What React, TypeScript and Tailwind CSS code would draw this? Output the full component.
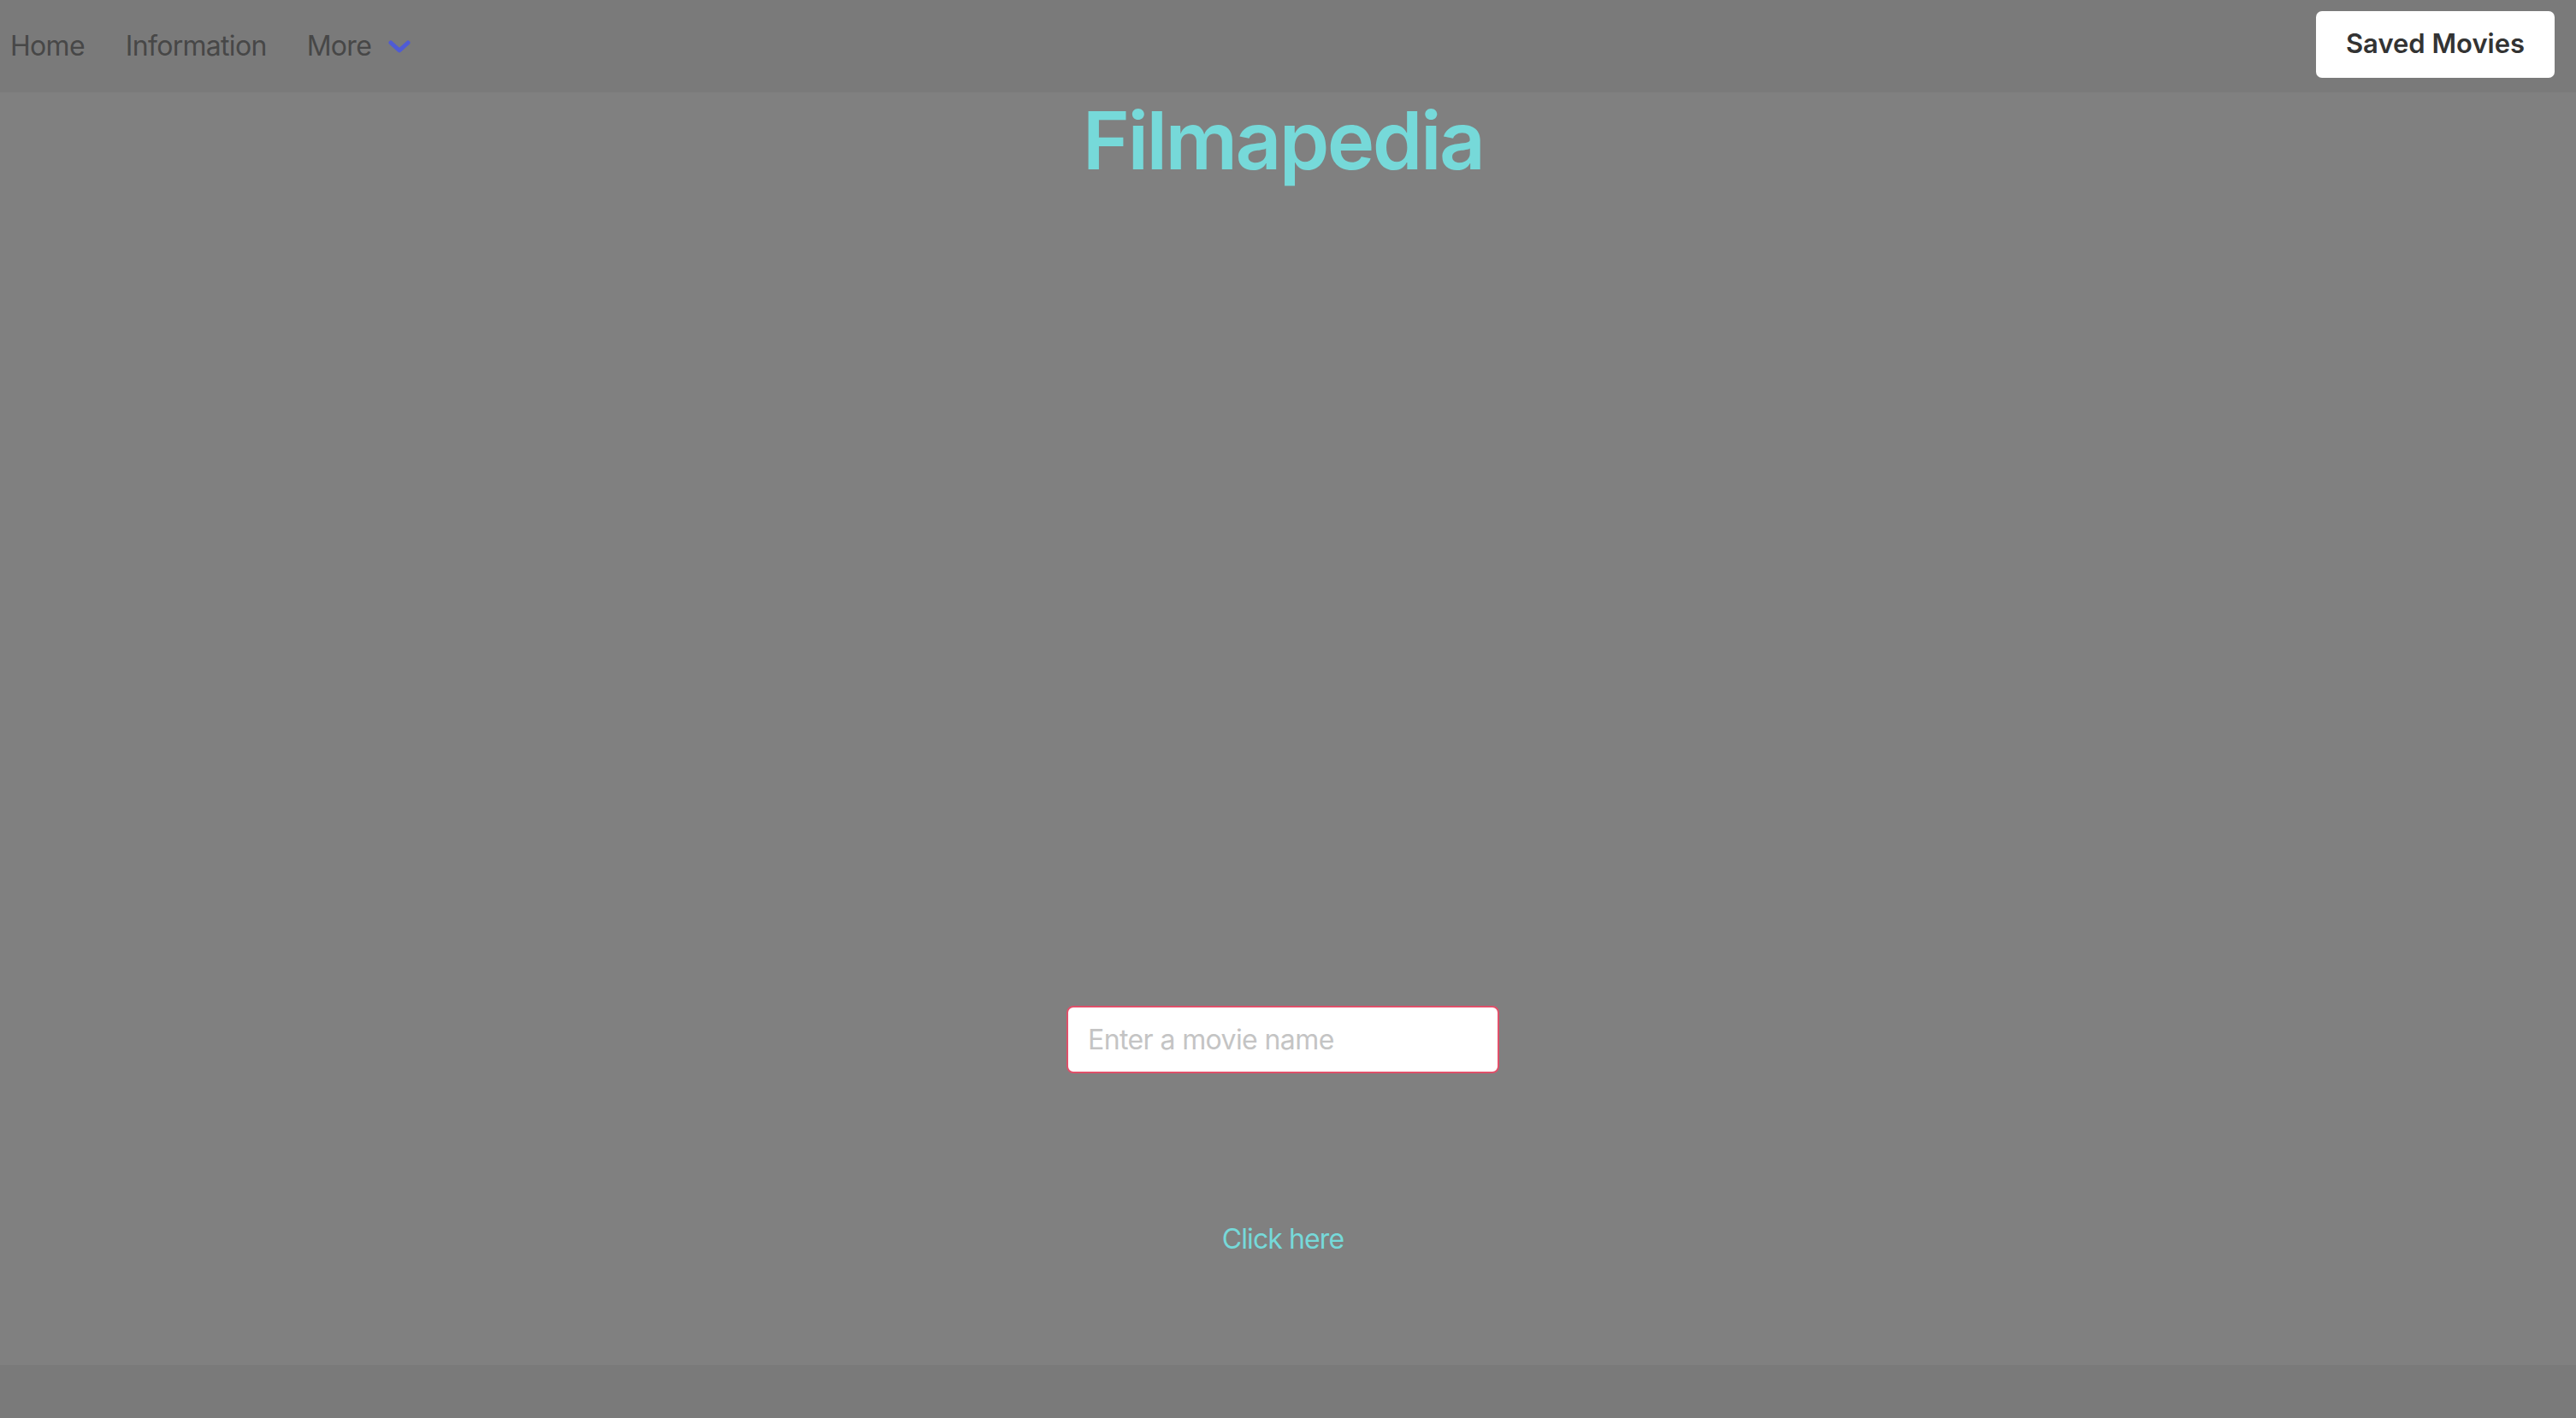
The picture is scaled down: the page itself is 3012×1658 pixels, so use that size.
import React from "react";

export default function App() {
  return (
    <div
      className="min-h-screen w-full flex flex-col bg-[#7a7a7a]"
      style={{ fontFamily: "Inter, 'Noto Sans', sans-serif" }}
    >
      <nav className="h-[108px] bg-[#7a7a7a] flex items-center justify-between pl-[12px] pr-[25px]">
        <div className="flex items-center text-[32px] tracking-[-0.7px] text-[#474747]">
          <span>Home</span>
          <span className="ml-[48px]">Information</span>
          <span className="ml-[47px]">More</span>
          <svg
            className="ml-[20px] mt-[2px]"
            width="26"
            height="18"
            viewBox="0 0 26 18"
            fill="none"
          >
            <path
              d="M3 4 L13 13 L23 4"
              stroke="#4f5bd5"
              strokeWidth="5"
              strokeLinecap="round"
              strokeLinejoin="round"
            />
          </svg>
        </div>
        <button className="w-[279px] h-[78px] -mt-[5px] bg-white rounded-[7px] text-[31px] font-semibold text-[#333333] flex items-center justify-center">
          Saved Movies
        </button>
      </nav>
      <main className="h-[1488px] bg-[#808080] flex flex-col items-center pr-[12px]">
        <h1 className="text-[94px] leading-[1.2] font-semibold text-[#76d9d9] tracking-[-2.6px]">
          Filmapedia
        </h1>
        <input
          className="mt-[955px] w-[506px] h-[79px] bg-white border-2 border-[#e0506a] rounded-[8px] px-[23px] text-[32px] tracking-[-0.6px] text-[#333] placeholder:text-[#c4c4c4] outline-none"
          placeholder="Enter a movie name"
        />
        <a className="mt-[170px] text-[32px] leading-[1.5] tracking-[-0.9px] text-[#76d9d9]">
          Click here
        </a>
      </main>
      <footer className="flex-1 bg-[#7a7a7a]" />
    </div>
  );
}
